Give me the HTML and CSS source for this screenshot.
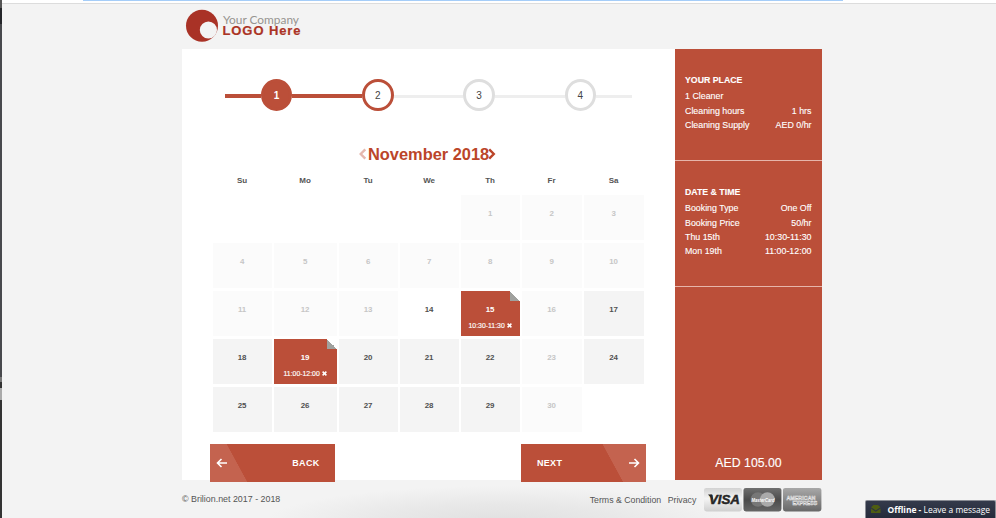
FILE: index.html
```html
<!DOCTYPE html>
<html lang="en">
<head>
<meta charset="utf-8">
<title>Booking</title>
<link rel="stylesheet" href="styles.css">
</head>
<body>
<div class="edge"></div>
<div class="topbar"><div class="topline"></div></div>
<div class="page">
  <header class="header">
    <svg class="logo" width="120" height="36" viewBox="0 0 120 36">
      <circle cx="17" cy="17.700" r="16" fill="#a93226"/>
      <circle cx="23.400" cy="22" r="8.600" fill="#f3f3f3"/>
      <text x="38" y="16" class="logo-top" textLength="76" lengthAdjust="spacingAndGlyphs">Your Company</text>
      <text x="37.500" y="26.700" class="logo-bottom" textLength="78" lengthAdjust="spacing">LOGO Here</text>
    </svg>
  </header>
  <div class="content">
    <main class="main">
      <div class="steps">
        <span class="line done"></span><span class="step active">1</span>
        <span class="line done wide"></span><span class="step current">2</span>
        <span class="line wide"></span><span class="step">3</span>
        <span class="line wide"></span><span class="step">4</span>
        <span class="line"></span>
      </div>
      <div class="month">
        <svg class="prev" width="8" height="12" viewBox="0 0 8 12"><path d="M6.300 1.300 1.700 6l4.600 4.700"/></svg>
        <h1>November 2018</h1>
        <svg class="next-month" width="8" height="12" viewBox="0 0 8 12"><path d="M1.200 1.300 5.800 6l-4.600 4.700"/></svg>
      </div>
      <div class="weekdays"><span>Su</span><span>Mo</span><span>Tu</span><span>We</span><span>Th</span><span>Fr</span><span>Sa</span></div>
      <div class="days">
        <div class="day first off">1</div><div class="day off">2</div><div class="day off">3</div>
        <div class="day off">4</div><div class="day off">5</div><div class="day off">6</div><div class="day off">7</div><div class="day off">8</div><div class="day off">9</div><div class="day off">10</div>
        <div class="day off">11</div><div class="day off">12</div><div class="day off">13</div><div class="day today">14</div>
        <div class="day picked">15<span class="slot">10:30-11:30 <svg width="5" height="5" viewBox="0 0 5 5"><path d="M.6.6l3.800 3.800M4.400.6.6 4.400"/></svg></span></div>
        <div class="day off">16</div><div class="day">17</div>
        <div class="day">18</div>
        <div class="day picked">19<span class="slot">11:00-12:00 <svg width="5" height="5" viewBox="0 0 5 5"><path d="M.6.6l3.800 3.800M4.400.6.6 4.400"/></svg></span></div>
        <div class="day">20</div><div class="day">21</div><div class="day">22</div><div class="day off">23</div><div class="day">24</div>
        <div class="day">25</div><div class="day">26</div><div class="day">27</div><div class="day">28</div><div class="day">29</div><div class="day off">30</div>
      </div>
      <div class="actions">
        <div class="btn back"><svg width="12" height="10" viewBox="0 0 12 10"><path d="M11 5H1.500M5.500 1l-4 4 4 4"/></svg><span>BACK</span></div>
        <div class="btn next"><span>NEXT</span><svg width="12" height="10" viewBox="0 0 12 10"><path d="M1 5h9.500M6.500 1l4 4-4 4"/></svg></div>
      </div>
    </main>
    <aside class="side">
      <section class="place">
        <h2>YOUR PLACE</h2>
        <p><span>1 Cleaner</span></p>
        <p><span>Cleaning hours</span><span>1 hrs</span></p>
        <p><span>Cleaning Supply</span><span>AED 0/hr</span></p>
      </section>
      <section class="when">
        <h2>DATE &amp; TIME</h2>
        <p><span>Booking Type</span><span>One Off</span></p>
        <p><span>Booking Price</span><span>50/hr</span></p>
        <p><span>Thu 15th</span><span>10:30-11:30</span></p>
        <p><span>Mon 19th</span><span>11:00-12:00</span></p>
      </section>
      <div class="total">AED 105.00</div>
    </aside>
  </div>
  <footer class="footer">
    <span class="copy">© Brilion.net 2017 - 2018</span>
    <span class="terms">Terms &amp; Condition</span>
    <span class="privacy">Privacy</span>
    <svg class="cards" width="118" height="24" viewBox="0 0 118 24">
      <defs>
        <linearGradient id="light" x2="0" y2="1"><stop stop-color="#d2d2d2"/><stop offset=".45" stop-color="#f4f4f4"/><stop offset="1" stop-color="#cfcfcf"/></linearGradient>
        <linearGradient id="dark" x2="0" y2="1"><stop stop-color="#6f6f6f"/><stop offset=".5" stop-color="#4b4b4b"/><stop offset="1" stop-color="#666"/></linearGradient>
        <linearGradient id="mid" x2="0" y2="1"><stop stop-color="#a8a8a8"/><stop offset="1" stop-color="#686868"/></linearGradient>
      </defs>
      <rect x="0" y="0" width="38" height="23.500" rx="2.500" fill="url(#light)"/>
      <path d="M4 6.500h4l1.500 6z" fill="#262626"/>
      <text x="5" y="16.200" class="visa" textLength="31" lengthAdjust="spacingAndGlyphs">VISA</text>
      <rect x="39.500" y="0" width="38" height="23.500" rx="2.500" fill="url(#dark)"/>
      <circle cx="54" cy="11.500" r="7.300" fill="#777"/><circle cx="63.500" cy="11.500" r="7.300" fill="#aaa"/>
      <text x="47.500" y="13.800" class="master" textLength="23" lengthAdjust="spacingAndGlyphs">MasterCard</text>
      <rect x="79" y="0" width="38.500" height="23.500" rx="2.500" fill="url(#mid)"/>
      <text x="82.500" y="11.800" class="amex" textLength="29" lengthAdjust="spacingAndGlyphs">AMERICAN</text>
      <text x="88.500" y="17.500" class="amex" textLength="25" lengthAdjust="spacingAndGlyphs">EXPRESS</text>
    </svg>
  </footer>
</div>
<div class="chat">
  <svg width="131" height="18" viewBox="0 0 131 18">
    <path d="M6 7.200 8.500 5h4.400L15.500 7.200l-4.700 3.200zM6 8.500l4.800 3.200 4.700-3.200V13H6z" fill="#4e5d12"/>
    <text x="22.500" y="13" textLength="102.500" lengthAdjust="spacingAndGlyphs"><tspan font-weight="700">Offline -</tspan> Leave a message</text>
  </svg>
</div>
</body>
</html>
```
FILE: styles.css
```css
* { box-sizing: border-box; }
body {
  margin: 0;
  width: 996px;
  height: 518px;
  overflow: hidden;
  background: radial-gradient(ellipse 235px 36px at 500px 522px, #e0e0e0, #e8e8e8 50%, #f3f3f3 100%) no-repeat #f3f3f3;
  font-family: "Liberation Sans", Arial, sans-serif;
  color: #555;
}
.edge { position: absolute; left: 0; top: 0; width: 2px; height: 518px; background: linear-gradient(#555 0 8px, #25262a 8px 24px, #48494d 24px 377px, #777 377px 382px, #333 382px 388px, #aaa 388px 400px, #333 400px); }
.topbar { height: 4px; background: #fff; border-bottom: 1px solid #dcdcdc; }
.topline { width: 760px; height: 1px; margin-left: 83px; background: #a5cdf8; }
.page { width: 640px; margin-left: 182px; }
.header { height: 45px; padding: 4px 0 0 3px; }
.logo { display: block; }
.logo-top { font: 11.500px Lato, sans-serif; fill: #969490; }
.logo-bottom { font: 700 13px "Liberation Sans", sans-serif; fill: #ab3425; stroke: #ab3425; stroke-width: .2px; }
.content { display: flex; height: 431px; justify-content: space-between; }
.main { width: 492.500px; background: #fff; }
.steps { display: flex; align-items: center; margin: 30px 0 0 43px; width: 407px; height: 32px; }
.line { width: 36px; height: 3px; background: #eee; margin-top: 2px; }
.line.wide { width: 70px; }
.line.done { height: 4px; background: #bb4f39; }
.step { width: 31.300px; height: 32px; flex: none; border: 3px solid #dedede; border-radius: 50%; font-size: 10px; line-height: 28px; text-align: center; color: #444; }
.step.active { background: #bb4f39; border-color: #bb4f39; color: #fff; font-weight: 700; }
.step.current { border-color: #bb4f39; }
.month { display: flex; align-items: center; height: 20px; margin: 33px 0 0 177px; }
.month h1 { margin: -1px -1px 0 1px; font-size: 16.400px; line-height: 20px; color: #bb4529; white-space: nowrap; }
.month path { fill: none; stroke: #bb4529; stroke-width: 2.400; }
.month .prev path { stroke: #e5b8ae; }
.weekdays, .days { display: grid; grid-template-columns: 59px 63px 59px 59px 59px 60px 60px; column-gap: 2px; margin-left: 30.600px; }
.weekdays { margin-top: 12px; font-size: 8px; line-height: 10px; font-weight: 700; text-align: center; }
.days { grid-auto-rows: 45.700px; row-gap: 2.300px; margin-top: 8.600px; }
.day { position: relative; background: #f4f4f4; padding-top: 14px; font-size: 7.900px; line-height: 10px; font-weight: 700; text-align: center; color: #505050; }
.day.first { grid-column: 5; }
.day.off { background: #fbfbfb; color: #c6c6c6; }
.day.today { background: #fff; }
.day.picked { background: #bb4f39; color: #fff; }
.day.picked::after { content: ""; position: absolute; right: 0; top: 0; width: 10px; height: 10px; background: linear-gradient(45deg, #a0a19e 50%, #fff 50%); }
.slot { display: block; margin-top: 6.500px; font-size: 6.900px; font-weight: 400; white-space: nowrap; -webkit-text-stroke: .15px #fff; }
.slot path { stroke: #fff; stroke-width: 1.500; }
.actions { display: flex; justify-content: space-between; margin: 11.400px 28.500px 0 28px; }
.btn { display: flex; align-items: center; justify-content: space-between; width: 125px; height: 38px; font-size: 9px; font-weight: 700; letter-spacing: .3px; color: #fff; }
.btn path { fill: none; stroke: #fff; stroke-width: 1.600; }
.back { padding: 0 15.500px 0 6px; background: linear-gradient(61.500deg, #c4634f 32.500px, #bb4f39 33px); }
.next { padding: 0 6px 0 16px; background: linear-gradient(241.500deg, #c4634f 38px, #bb4f39 38.500px); }
.side { display: flex; flex-direction: column; width: 147px; background: #bb4f39; color: #fff; font-size: 8.850px; -webkit-text-stroke: .12px #fff; }
.side section { padding: 24px 10.500px 0 10px; border-bottom: 1px solid #e6b5aa; }
.place { height: 112px; }
.when { height: 126px; }
.side h2 { margin: 0 0 2.200px; font-size: 8.750px; line-height: 14px; }
.side p { display: flex; justify-content: space-between; margin: 0; line-height: 14.400px; }
.total { margin-top: auto; padding-bottom: 9px; text-align: center; font-size: 12.300px; line-height: 16px; }
.footer { display: flex; height: 38px; font-size: 8.900px; line-height: 12px; }
.copy { padding-top: 12.500px; width: 408px; }
.terms, .privacy { padding-top: 13.500px; font-size: 8.750px; }
.terms { width: 78px; white-space: nowrap; }
.privacy { width: 36.500px; }
.cards { margin-top: 7.500px; }
.visa { font: italic 700 13px "Liberation Sans", sans-serif; fill: #262626; stroke: #262626; stroke-width: .5px; }
.master { font: italic 700 5.500px "Liberation Sans", sans-serif; fill: #fff; }
.amex { font: 700 5.600px "Liberation Sans", sans-serif; fill: #999; stroke: #eee; stroke-width: .4px; }
.chat { position: absolute; left: 865px; top: 500px; width: 131px; height: 18px; background: linear-gradient(#343a4b, #252b3b); border: 1px solid #898c94; border-bottom: 0; border-radius: 2px 2px 0 0; }
.chat svg { display: block; margin: -1px; }
.chat text { font: 8.500px "Open Sans", sans-serif; fill: #fff; }
```
